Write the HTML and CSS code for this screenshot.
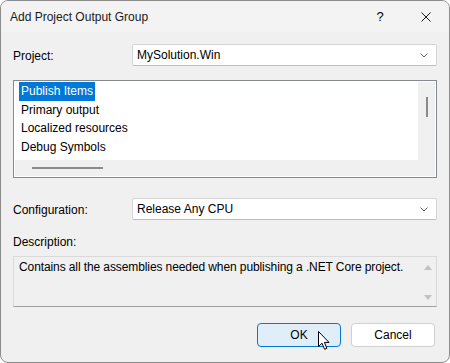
FILE: index.html
```html
<!DOCTYPE html>
<html lang="en">
<head>
    <meta charset="UTF-8">
    <title>Add Project Output Group</title>
    <link rel="stylesheet" href="styles.css">
</head>
<body>
    <div class="window">
        <div class="titlebar">
            <span class="title">Add Project Output Group</span>
            <span class="help">?</span>
            <span class="close">
                <svg width="10" height="10" viewBox="0 0 10 10"><path d="M0.5 0.5 L9.5 9.5 M9.5 0.5 L0.5 9.5" stroke="#1a1a1a" stroke-width="1" fill="none"/></svg>
            </span>
        </div>

        <div class="content">
            <div class="field-row">
                <label class="field-label">Project:</label>
                <div class="combo">
                    <span>MySolution.Win</span>
                    <svg class="chevron" width="8" height="5" viewBox="0 0 8 5"><path d="M0.5 0.5 L4 4 L7.5 0.5" stroke="#606060" fill="none"/></svg>
                </div>
            </div>

            <div class="listbox">
                <div class="list-inner">
                    <ul class="items">
                        <li><span class="selected">Publish Items</span></li>
                        <li><span>Primary output</span></li>
                        <li><span>Localized resources</span></li>
                        <li><span>Debug Symbols</span></li>
                    </ul>
                    <div class="vscroll"><div class="vthumb"></div></div>
                    <div class="hscroll"><div class="hthumb"></div></div>
                    <div class="corner"></div>
                </div>
            </div>

            <div class="field-row config-row">
                <label class="field-label">Configuration:</label>
                <div class="combo">
                    <span>Release Any CPU</span>
                    <svg class="chevron" width="8" height="5" viewBox="0 0 8 5"><path d="M0.5 0.5 L4 4 L7.5 0.5" stroke="#606060" fill="none"/></svg>
                </div>
            </div>

            <div class="desc-label">Description:</div>
            <div class="desc-box">
                <p class="desc-text">Contains all the assemblies needed when publishing a .NET Core project.</p>
                <div class="desc-scroll">
                    <span class="arrow-up"></span>
                    <span class="arrow-down"></span>
                </div>
            </div>

            <div class="buttons">
                <button class="btn btn-default">OK</button>
                <button class="btn">Cancel</button>
            </div>
        </div>

        <svg class="cursor" width="13" height="20" viewBox="0 0 13 20">
            <path d="M0.5 0.5 L0.5 15.5 L4 12.2 L6.6 18.3 L8.9 17.3 L6.4 11.4 L11 11.4 Z" fill="#fff" stroke="#000" stroke-width="1" stroke-linejoin="round"/>
        </svg>
    </div>
</body>
</html>
```

FILE: styles.css
```css
body {
    margin: 0;
    background-color: #fff;
    font-family: "Liberation Sans", sans-serif;
    font-size: 12px;
    color: #000;
}

.window {
    position: relative;
    width: 450px;
    height: 363px;
    box-sizing: border-box;
    border: 1px solid #8c8c8c;
    border-radius: 8px;
    background-color: #f0f0f0;
    overflow: hidden;
}

.titlebar {
    display: flex;
    align-items: center;
    height: 31px;
    background-color: #f3f3f3;
}

.title {
    flex: 1;
    padding-left: 9px;
    color: #1a1a1a;
}

.help {
    width: 46px;
    text-align: center;
    font-size: 13px;
}

.close {
    display: flex;
    justify-content: center;
    width: 46px;
}

.content {
    padding: 12px 12px 0 12px;
}

.field-row {
    display: flex;
    align-items: center;
    height: 22px;
}

.field-label {
    width: 119px;
    padding-top: 2px;
}

.combo {
    flex: 1;
    display: flex;
    align-items: center;
    justify-content: space-between;
    height: 22px;
    box-sizing: border-box;
    padding: 0 8px 0 4px;
    background-color: #fff;
    border: 1px solid #d4d4d4;
    border-bottom-color: #bdbdbd;
    border-radius: 2px;
}

.listbox {
    margin-top: 14px;
    height: 98px;
    box-sizing: border-box;
    border: 1px solid #858a91;
    padding: 1px;
    background-color: #fff;
}

.list-inner {
    display: grid;
    grid-template-columns: 1fr 17px;
    grid-template-rows: 1fr 16px;
    height: 100%;
}

.items {
    list-style: none;
    margin: 0;
    padding: 0 0 0 4px;
    background-color: #fff;
}

.items li {
    height: 18.7px;
    line-height: 19px;
}

.items span {
    display: inline-block;
    padding: 0 2px;
}

.items .selected {
    background-color: #0078d7;
    color: #fff;
}

.vscroll, .hscroll, .corner {
    background-color: #f0f0f0;
}

.vscroll {
    display: flex;
    justify-content: center;
    padding-top: 15px;
}

.vthumb {
    width: 2px;
    height: 20px;
    background-color: #8a8a8a;
}

.hscroll {
    display: flex;
    align-items: center;
    padding-left: 17px;
}

.hthumb {
    width: 71px;
    height: 2px;
    background-color: #8a8a8a;
}

.config-row {
    margin-top: 20px;
}

.desc-label {
    margin-top: 15px;
    line-height: 15px;
}

.desc-box {
    display: flex;
    margin-top: 6px;
    height: 51px;
    box-sizing: border-box;
    border: 1px solid #dadada;
    border-bottom-color: #a0a0a0;
}

.desc-text {
    flex: 1;
    margin: 0;
    padding: 3px 5px;
    line-height: 15px;
    letter-spacing: -0.1px;
}

.desc-scroll {
    width: 17px;
    display: flex;
    flex-direction: column;
    justify-content: space-between;
    align-items: center;
    padding: 8px 0 6px;
}

.arrow-up, .arrow-down {
    width: 0;
    height: 0;
    border-left: 4px solid transparent;
    border-right: 4px solid transparent;
}

.arrow-up {
    border-bottom: 5px solid #c2c2c2;
}

.arrow-down {
    border-top: 5px solid #c2c2c2;
}

.buttons {
    display: flex;
    justify-content: flex-end;
    gap: 10px;
    margin-top: 16px;
    padding-right: 2px;
}

.btn {
    width: 84px;
    height: 24px;
    font-family: "Liberation Sans", sans-serif;
    font-size: 12px;
    color: #000;
    background-color: #fff;
    border: 1px solid #d0d0d0;
    border-radius: 4px;
}

.btn-default {
    background-color: #e0eef9;
    border-color: #0078d4;
}

.cursor {
    position: absolute;
    left: 317px;
    top: 330px;
}
```
